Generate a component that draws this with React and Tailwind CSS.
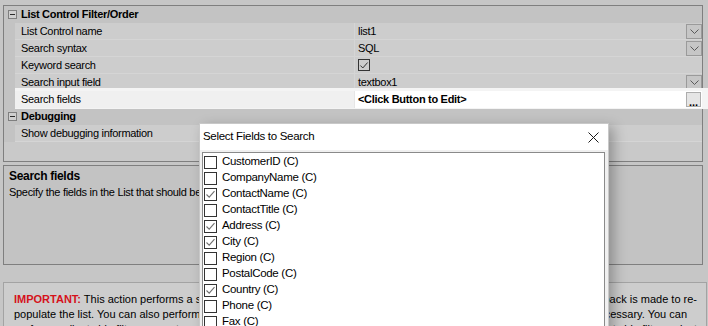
const gridFont = { fontFamily: '"Liberation Sans", Arial, sans-serif' };

const fields = [
  { name: "CustomerID (C)", checked: false },
  { name: "CompanyName (C)", checked: false },
  { name: "ContactName (C)", checked: true },
  { name: "ContactTitle (C)", checked: false },
  { name: "Address (C)", checked: true },
  { name: "City (C)", checked: true },
  { name: "Region (C)", checked: false },
  { name: "PostalCode (C)", checked: false },
  { name: "Country (C)", checked: true },
  { name: "Phone (C)", checked: false },
  { name: "Fax (C)", checked: false },
];

function Chevron() {
  return (
    <svg width="9" height="5" viewBox="0 0 9 5">
      <path d="M0.5 0.5 L4.5 4.5 L8.5 0.5" fill="none" stroke="#5a5a5a" strokeWidth="1" />
    </svg>
  );
}

function DropButton() {
  return (
    <div className="flex h-[15px] w-[16px] items-center justify-center border border-[#9a9a9a] bg-[#c6c6c6]">
      <Chevron />
    </div>
  );
}

function Category({ title }) {
  return (
    <div className="flex h-[17px] items-center bg-[#c3c3c3]">
      <div className="flex w-[17px] items-center justify-center">
        <div className="flex h-[9px] w-[9px] items-center justify-center border border-[#7f7f7f] bg-[#cfcfcf]">
          <div className="h-px w-[5px] bg-[#2a2a2a]" />
        </div>
      </div>
      <span className="font-bold">{title}</span>
    </div>
  );
}

function PropRow({ label, children, right }) {
  return (
    <div className="flex h-[17px]">
      <div className="w-[11px] bg-[#c3c3c3]" />
      <div className="w-[340px] border-b border-r border-[#d5d5d5] bg-[#cdcdcd] pl-[6px] leading-[16px]">
        {label}
      </div>
      <div className="flex flex-1 items-center justify-between border-b border-[#d5d5d5] bg-[#cdcdcd] pl-[3px]">
        <div className="leading-[16px]">{children}</div>
        {right}
      </div>
    </div>
  );
}

function SelectedRow() {
  return (
    <div className="relative z-10 flex h-[17px]">
      <div className="w-[11px] bg-[#c3c3c3]" />
      <div className="relative flex flex-1">
        <div className="absolute -bottom-[1px] -right-[7px] -top-[3px] left-0 -z-10 bg-[#f4f4f4]" />
        <div className="w-[340px] border-r border-[#e6e6e6] bg-[#f0f0f0] pl-[6px] leading-[17px]">Search fields</div>
        <div className="flex flex-1 items-center justify-between bg-white pl-[3px]">
          <span className="font-bold leading-[17px]">&lt;Click Button to Edit&gt;</span>
          <div className="mr-[1px] flex h-[15px] w-[15px] items-end justify-center border border-[#adadad] bg-[#e5e5e5] pb-[1px]">
            <span className="text-[11px] font-bold leading-[6px] tracking-[0px]">...</span>
          </div>
        </div>
      </div>
    </div>
  );
}

function CheckMark({ color }) {
  return (
    <svg width="11" height="11" viewBox="0 0 11 11">
      <path d="M1.5 5.5 L4.2 8.2 L9.5 2.2" fill="none" stroke={color} strokeWidth="1.1" />
    </svg>
  );
}

function Dialog() {
  return (
    <div
      className="absolute left-[199px] top-[123px] w-[410px] border border-[#c8c8c8] bg-[#f0f0f0] shadow-[5px_4px_12px_rgba(0,0,0,0.28)]"
      style={gridFont}
    >
      <div className="flex h-[26px] items-center justify-between bg-white pl-[3px] pr-[9px] text-[11.5px] text-black">
        <span>Select Fields to Search</span>
        <svg width="11" height="11" viewBox="0 0 11 11">
          <path d="M0.5 0.5 L10.5 10.5 M10.5 0.5 L0.5 10.5" stroke="#1a1a1a" strokeWidth="1" />
        </svg>
      </div>
      <div className="pl-[2px] pr-[3px] pt-[2px]">
        <div className="h-[200px] border border-[#8a8a8a] bg-white pl-[1px] pt-px">
          {fields.map((f) => (
            <div key={f.name} className="flex h-[16px] items-center gap-[5px] text-[11.5px] text-black">
              <div className="flex h-[13px] w-[13px] items-center justify-center border border-[#333333] bg-white">
                {f.checked && <CheckMark color="#707070" />}
              </div>
              <span>{f.name}</span>
            </div>
          ))}
        </div>
      </div>
    </div>
  );
}

function InfoLine({ left, right, pr }) {
  return (
    <div className={`flex h-[15px] items-center justify-between whitespace-nowrap ${pr}`}>
      <span>{left}</span>
      <span>{right}</span>
    </div>
  );
}

export default function App() {
  return (
    <div
      className="relative h-[326px] w-[708px] overflow-hidden bg-[#c6c6c6] text-[11px] tracking-[-0.3px] text-black"
      style={gridFont}
    >
      <div className="pt-[5px]">
        <div className="ml-[3px] flex h-[157px] w-[700px] flex-col border border-[#7f7f7f] bg-[#c9c9c9]">
          <Category title="List Control Filter/Order" />
          <PropRow label="List Control name" right={<DropButton />}>list1</PropRow>
          <PropRow label="Search syntax" right={<DropButton />}>SQL</PropRow>
          <PropRow label="Keyword search">
            <div className="flex h-[12px] w-[12px] items-center justify-center border border-[#333333] bg-[#cdcdcd]">
              <CheckMark color="#333333" />
            </div>
          </PropRow>
          <PropRow label="Search input field" right={<DropButton />}>textbox1</PropRow>
          <SelectedRow />
          <Category title="Debugging" />
          <PropRow label="Show debugging information">False</PropRow>
        </div>

        <div className="ml-[3px] mt-[3px] h-[100px] w-[700px] border border-[#7f7f7f] bg-[#c3c3c3] px-[5px] pt-[2px]">
          <div className="text-[12px] font-bold leading-[16px]">Search fields</div>
          <div className="leading-[16px]">Specify the fields in the List that should be searched.</div>
        </div>

        <div className="ml-[3px] mt-[17px] h-[60px] w-[704px] border border-[#a3a3a3] bg-[#cdcdcd] pl-[10px] pr-[9px] pt-[9px] tracking-[0px]">
          <InfoLine
            left={
              <>
                <span className="font-bold text-[#d5121b]">IMPORTANT:</span> This action performs a server side
              </>
            }
            right="search and a postback is made to re-"
            pr="pr-0"
          />
          <InfoLine left="populate the list. You can also perform" right="additional filtering if necessary. You can" pr="pr-[10px]" />
          <InfoLine left="perform a client side filter on any type" right="of list. To use a client side filter, select" pr="pr-0" />
        </div>
      </div>

      <Dialog />
    </div>
  );
}
